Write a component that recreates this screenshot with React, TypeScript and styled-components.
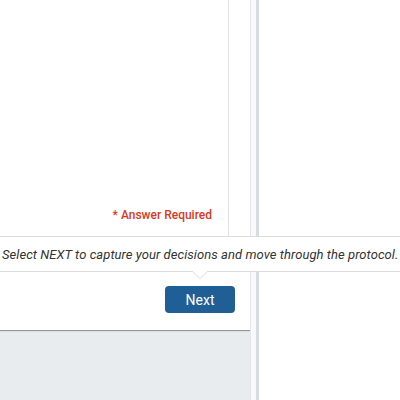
import * as React from 'react';
import styled, { createGlobalStyle } from 'styled-components';

const GlobalStyle = createGlobalStyle`
  html, body {
    margin: 0;
    padding: 0;
    overflow: hidden;
    font-family: Roboto, "Liberation Sans", Arial, sans-serif;
  }
`;

const Page = styled.div`
  position: relative;
  display: flex;
  width: 400px;
  height: 400px;
  background: #ffffff;
`;

const LeftColumn = styled.div`
  display: flex;
  flex-direction: column;
  width: 250px;
  background: #e9ecef;
`;

const Card = styled.div`
  display: flex;
  flex-direction: column;
  height: 330px;
  background: #ffffff;
  box-shadow: 0 1px 1px rgba(0, 0, 0, 0.35);
`;

const QuestionBox = styled.div`
  display: flex;
  align-items: flex-end;
  justify-content: flex-end;
  width: 229px;
  height: 236px;
  border-right: 1px solid #e2e2e2;
  box-sizing: border-box;
  padding: 0 16px 14px 0;
`;

const Required = styled.span`
  font-size: 12px;
  font-weight: 500;
  color: #d93a22;
`;

const Footer = styled.div`
  display: flex;
  justify-content: flex-end;
  padding: 50px 15px 0 0;
`;

const NextButton = styled.button`
  width: 70px;
  height: 27px;
  border: none;
  border-radius: 4px;
  background: #1f5f96;
  color: #ffffff;
  font-family: Roboto, "Liberation Sans", Arial, sans-serif;
  font-size: 14px;
  padding: 0;
`;

const Gutter = styled.div`
  width: 6px;
  background: #f8f9fa;
  border-left: 1px solid #e6e6e6;
  box-sizing: border-box;
`;

const Divider = styled.div`
  width: 3px;
  background: #d6dce1;
`;

const RightPanel = styled.div`
  flex: 1;
  background: #ffffff;
`;

const Tooltip = styled.div`
  position: absolute;
  top: 236px;
  left: -10px;
  right: -10px;
  height: 36px;
  box-sizing: border-box;
  display: flex;
  align-items: center;
  padding-left: 12px;
  background: #ffffff;
  border-top: 1px solid #dcdcdc;
  border-bottom: 1px solid #dcdcdc;
  font-size: 13px;
  font-style: italic;
  letter-spacing: 0.06px;
  color: #333333;
  white-space: nowrap;
`;

const Arrow = styled.svg`
  position: absolute;
  left: 202px;
  bottom: -8px;
`;

export default function App() {
  return (
    <>
      <GlobalStyle />
      <Page>
        <LeftColumn>
          <Card>
            <QuestionBox>
              <Required>* Answer Required</Required>
            </QuestionBox>
            <Footer>
              <NextButton type="button">Next</NextButton>
            </Footer>
          </Card>
        </LeftColumn>
        <Gutter />
        <Divider />
        <RightPanel />
        <Tooltip>
          Select NEXT to capture your decisions and move through the protocol.
          <Arrow width="16" height="8" viewBox="0 0 16 8">
            <polygon points="0,0 8,7.5 16,0" fill="#ffffff" />
            <polyline points="0,0 8,7.5 16,0" fill="none" stroke="#dcdcdc" strokeWidth="1" />
          </Arrow>
        </Tooltip>
      </Page>
    </>
  );
}
